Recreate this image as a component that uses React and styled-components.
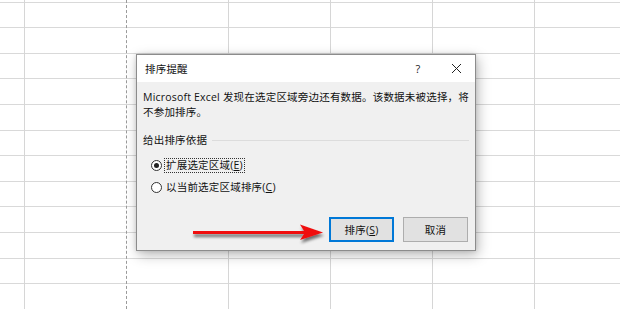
import React from "react";
import styled, { createGlobalStyle } from "styled-components";

const GlobalStyle = createGlobalStyle`
  html, body {
    margin: 0;
    padding: 0;
    background: #ffffff;
  }
  body {
    font-family: "Open Sans", "Noto Sans CJK SC", sans-serif;
  }
`;

/* ---------- sheet background ---------- */

const Stage = styled.div`
  position: relative;
  width: 620px;
  height: 309px;
  overflow: hidden;
  background-color: #ffffff;
  background-image: repeating-linear-gradient(
    to bottom,
    transparent 0,
    transparent 24.6px,
    #d9d9d9 24.6px,
    #d9d9d9 25.6px
  );
  background-position: 0 -23px;
`;

const Columns = styled.div`
  display: flex;
  height: 100%;
`;

const Column = styled.div`
  flex: 0 0 ${(p) => p.$w}px;
  height: 100%;
  box-sizing: border-box;
  border-right: 1px ${(p) => (p.$dashed ? "dashed #9a9a9a" : "solid #d6d6d6")};
`;

/* ---------- dialog ---------- */

const Dialog = styled.div`
  position: absolute;
  left: 136px;
  top: 54px;
  width: 340px;
  height: 197px;
  box-sizing: border-box;
  display: flex;
  flex-direction: column;
  background: #f0f0f0;
  border: 1px solid #8c8c8c;
  box-shadow: 2px 4px 12px rgba(0, 0, 0, 0.28), 0 0 4px rgba(0, 0, 0, 0.12);
  font-size: 10.5px;
  letter-spacing: 0.2px;
  color: #111;
`;

const TitleBar = styled.div`
  display: flex;
  align-items: center;
  height: 27px;
  padding: 0 0 0 8px;
  background: #ffffff;
`;

const Title = styled.div`
  flex: 1;
  font-size: 10.5px;
  color: #111;
`;

const TitleButton = styled.div`
  width: ${(p) => p.$w}px;
  height: 27px;
  display: flex;
  align-items: center;
  justify-content: center;
  font-size: 11px;
  color: #222;
`;

const Body = styled.div`
  flex: 1;
  display: flex;
  flex-direction: column;
  padding: 8px 6px 8px 6px;
`;

const Message = styled.p`
  margin: 0;
  line-height: 15px;
  white-space: nowrap;
`;

const GroupHeader = styled.div`
  display: flex;
  align-items: center;
  gap: 5px;
  margin-top: 13px;
  line-height: 15px;
  &::after {
    content: "";
    flex: 1;
    height: 1px;
    background: #dcdcdc;
  }
`;

const Options = styled.div`
  display: flex;
  flex-direction: column;
  gap: 7px;
  margin-top: 10px;
  padding-left: 8px;
`;

const Option = styled.label`
  display: flex;
  align-items: center;
  gap: 3px;
  height: 15px;
`;

const Radio = styled.span`
  width: 11px;
  height: 11px;
  box-sizing: border-box;
  border-radius: 50%;
  border: 1px solid #333;
  background: #fff;
  display: flex;
  align-items: center;
  justify-content: center;
  &::after {
    content: "";
    display: ${(p) => (p.$checked ? "block" : "none")};
    width: 5px;
    height: 5px;
    border-radius: 50%;
    background: #222;
  }
`;

const OptionText = styled.span`
  padding: 0 1px;
  line-height: 13px;
  outline: ${(p) => (p.$focused ? "1px dotted #333" : "none")};
`;

const Key = styled.span`
  text-decoration: underline;
`;

const Footer = styled.div`
  margin-top: auto;
  display: flex;
  justify-content: flex-end;
  gap: 9px;
  padding-right: 1px;
`;

const Button = styled.div`
  width: 65px;
  height: 25px;
  box-sizing: border-box;
  display: flex;
  align-items: center;
  justify-content: center;
  background: #e1e1e1;
  border: ${(p) => (p.$primary ? "2px solid #0078d7" : "1px solid #adadad")};
  font-size: 10.5px;
  color: #111;
`;

/* ---------- annotation arrow ---------- */

const Arrow = styled.svg`
  position: absolute;
  left: 0;
  top: 0;
  pointer-events: none;
`;

function CloseIcon() {
  return (
    <svg width="11" height="11" viewBox="0 0 11 11">
      <path d="M1 1 L10 10 M10 1 L1 10" stroke="#222" strokeWidth="1" fill="none" />
    </svg>
  );
}

export default function App() {
  const cols = [
    { w: 25 },
    { w: 102, dashed: true },
    { w: 102 },
    { w: 102 },
    { w: 102 },
    { w: 102 },
    { w: 102 },
  ];
  return (
    <>
      <GlobalStyle />
      <Stage>
        <Columns>
          {cols.map((c, i) => (
            <Column key={i} $w={c.w} $dashed={c.dashed} />
          ))}
        </Columns>

        <Dialog>
          <TitleBar>
            <Title>排序提醒</Title>
            <TitleButton $w={38}>?</TitleButton>
            <TitleButton $w={38}>
              <CloseIcon />
            </TitleButton>
          </TitleBar>
          <Body>
            <Message>
              Microsoft Excel 发现在选定区域旁边还有数据。该数据未被选择，将
              <br />
              不参加排序。
            </Message>
            <GroupHeader>给出排序依据</GroupHeader>
            <Options>
              <Option>
                <Radio $checked />
                <OptionText $focused>
                  扩展选定区域(<Key>E</Key>)
                </OptionText>
              </Option>
              <Option>
                <Radio />
                <OptionText>
                  以当前选定区域排序(<Key>C</Key>)
                </OptionText>
              </Option>
            </Options>
            <Footer>
              <Button $primary>
                排序(<Key>S</Key>)
              </Button>
              <Button>取消</Button>
            </Footer>
          </Body>
        </Dialog>

        <Arrow width="620" height="309" viewBox="0 0 620 309">
          <defs>
            <filter id="arrowShadow" x="-10%" y="-50%" width="120%" height="200%">
              <feGaussianBlur in="SourceAlpha" stdDeviation="1.6" />
              <feOffset dx="1" dy="2.5" result="b" />
              <feComponentTransfer>
                <feFuncA type="linear" slope="0.55" />
              </feComponentTransfer>
              <feMerge>
                <feMergeNode />
                <feMergeNode in="SourceGraphic" />
              </feMerge>
            </filter>
          </defs>
          <g filter="url(#arrowShadow)" fill="#f01010">
            <rect x="193" y="231" width="112" height="3" />
            <path d="M300 224.5 L323 232.5 L300 240 L305 232.5 Z" />
          </g>
        </Arrow>
      </Stage>
    </>
  );
}
